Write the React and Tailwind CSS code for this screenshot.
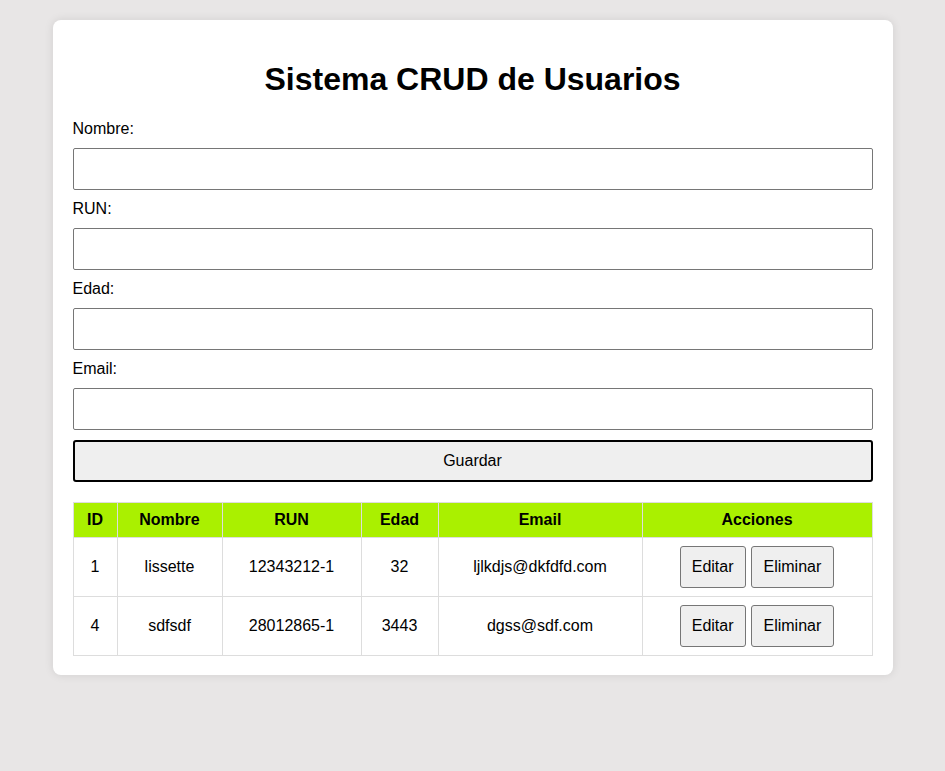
import React, { useState } from "react";

const usuarios = [
  { id: 1, nombre: "lissette", run: "12343212-1", edad: 32, email: "ljlkdjs@dkfdfd.com" },
  { id: 4, nombre: "sdfsdf", run: "28012865-1", edad: 3443, email: "dgss@sdf.com" },
];

const campos = [
  { key: "nombre", label: "Nombre:" },
  { key: "run", label: "RUN:" },
  { key: "edad", label: "Edad:" },
  { key: "email", label: "Email:" },
];

export default function App() {
  const [form, setForm] = useState({ nombre: "", run: "", edad: "", email: "" });

  return (
    <div
      className="min-h-[771px] bg-[#e8e6e6] pt-5 text-black"
      style={{ fontFamily: '"Liberation Sans", Arial, sans-serif' }}
    >
      <div className="mx-auto w-[840px] rounded-lg bg-white px-5 pt-5 pb-[19px] shadow-[0_0_10px_rgba(0,0,0,0.1)]">
        <h1 className="mt-[21px] mb-[22px] text-center text-[32px] font-bold leading-[37px]">
          Sistema CRUD de Usuarios
        </h1>

        <form onSubmit={(e) => e.preventDefault()}>
          {campos.map((c) => (
            <div key={c.key}>
              <label className="block text-base leading-[18px]">{c.label}</label>
              <input
                type="text"
                value={form[c.key]}
                onChange={(e) => setForm({ ...form, [c.key]: e.target.value })}
                className="my-2.5 block h-[42px] w-full rounded-[2px] border border-[#767676] px-2.5 text-base outline-none"
              />
            </div>
          ))}
          <button
            type="submit"
            className="block h-[42px] w-full rounded-[3px] border-2 border-black bg-[#efefef] text-base"
          >
            Guardar
          </button>
        </form>

        <table className="mt-5 w-full border-collapse text-base">
          <thead>
            <tr className="bg-[#aaf000]">
              <th className="w-[44px] border border-[#dddddd] p-2 leading-[18px]">ID</th>
              <th className="w-[105px] border border-[#dddddd] p-2 leading-[18px]">Nombre</th>
              <th className="w-[139px] border border-[#dddddd] p-2 leading-[18px]">RUN</th>
              <th className="w-[77px] border border-[#dddddd] p-2 leading-[18px]">Edad</th>
              <th className="w-[204px] border border-[#dddddd] p-2 leading-[18px]">Email</th>
              <th className="border border-[#dddddd] p-2 leading-[18px]">Acciones</th>
            </tr>
          </thead>
          <tbody>
            {usuarios.map((u) => (
              <tr key={u.id} className="h-[59px] text-center">
                <td className="border border-[#dddddd] p-2">{u.id}</td>
                <td className="border border-[#dddddd] p-2">{u.nombre}</td>
                <td className="border border-[#dddddd] p-2">{u.run}</td>
                <td className="border border-[#dddddd] p-2">{u.edad}</td>
                <td className="border border-[#dddddd] p-2">{u.email}</td>
                <td className="border border-[#dddddd] p-2">
                  <div className="flex justify-center gap-[5px]">
                    <button className="h-[42px] rounded-[3px] border border-[#767676] bg-[#efefef] px-[11px] text-base">
                      Editar
                    </button>
                    <button className="h-[42px] rounded-[3px] border border-[#767676] bg-[#efefef] px-[12px] text-base">
                      Eliminar
                    </button>
                  </div>
                </td>
              </tr>
            ))}
          </tbody>
        </table>
      </div>
    </div>
  );
}
